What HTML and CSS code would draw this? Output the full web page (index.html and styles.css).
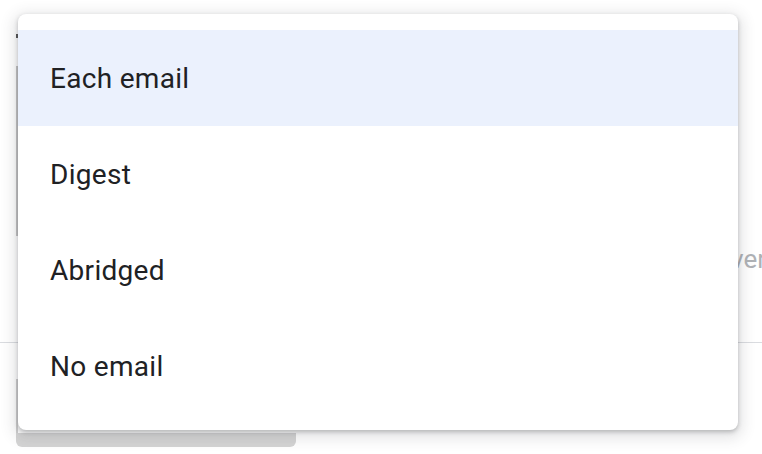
FILE: index.html
```html
<!DOCTYPE html>
<html>
<head>
<meta charset="utf-8">
<link rel="stylesheet" href="styles.css">
</head>
<body>
<div class="page">
  <div class="backdrop">
    <div class="field field-top"></div>
    <div class="field field-mid"></div>
    <div class="hint">whenever</div>
    <div class="rule"></div>
    <div class="field field-low"></div>
    <div class="button"></div>
  </div>
  <ul class="menu">
    <li class="item item-active">Each email</li>
    <li class="item">Digest</li>
    <li class="item">Abridged</li>
    <li class="item">No email</li>
  </ul>
</div>
</body>
</html>
```

FILE: styles.css
```css
html, body {
  margin: 0;
  padding: 0;
  background: #ffffff;
}
body {
  font-family: Roboto, "Noto Sans", Arial, sans-serif;
  width: 762px;
  height: 454px;
  overflow: hidden;
}
.page {
  position: relative;
  width: 762px;
  height: 454px;
}
.backdrop {
  display: flex;
  flex-direction: column;
  padding-top: 34px;
}
.field {
  margin-left: 16px;
  width: 300px;
  border-left: 2px solid #c8c8c8;
}
.field-top {
  height: 4px;
  border-left-color: #555;
  margin-bottom: 28px;
}
.field-mid {
  height: 170px;
  border-left-color: #c4c4c4;
}
.hint {
  align-self: flex-end;
  margin-top: 7px;
  margin-right: -4px;
  font-size: 26px;
  color: #afb2b6;
  line-height: 32px;
  height: 32px;
}
.rule {
  margin-top: 67px;
  height: 1px;
  background: #dadce0;
}
.field-low {
  margin-top: 36px;
  height: 54px;
  border-left-color: #cfcfcf;
}
.button {
  margin-left: 16px;
  width: 280px;
  height: 14px;
  background: #d4d4d4;
  border-radius: 0 0 6px 6px;
}
.menu {
  position: absolute;
  left: 18px;
  top: 14px;
  width: 720px;
  margin: 0;
  padding: 16px 0;
  list-style: none;
  background: #ffffff;
  border-radius: 8px;
  box-shadow: 0 2px 4px rgba(60, 64, 67, 0.3), 0 4px 14px 5px rgba(60, 64, 67, 0.13);
}
.item {
  height: 96px;
  display: flex;
  align-items: center;
  padding-left: 32px;
  font-size: 28px;
  color: #202124;
  letter-spacing: 0.3px;
}
.item-active {
  background: #ebf1fd;
}
```
